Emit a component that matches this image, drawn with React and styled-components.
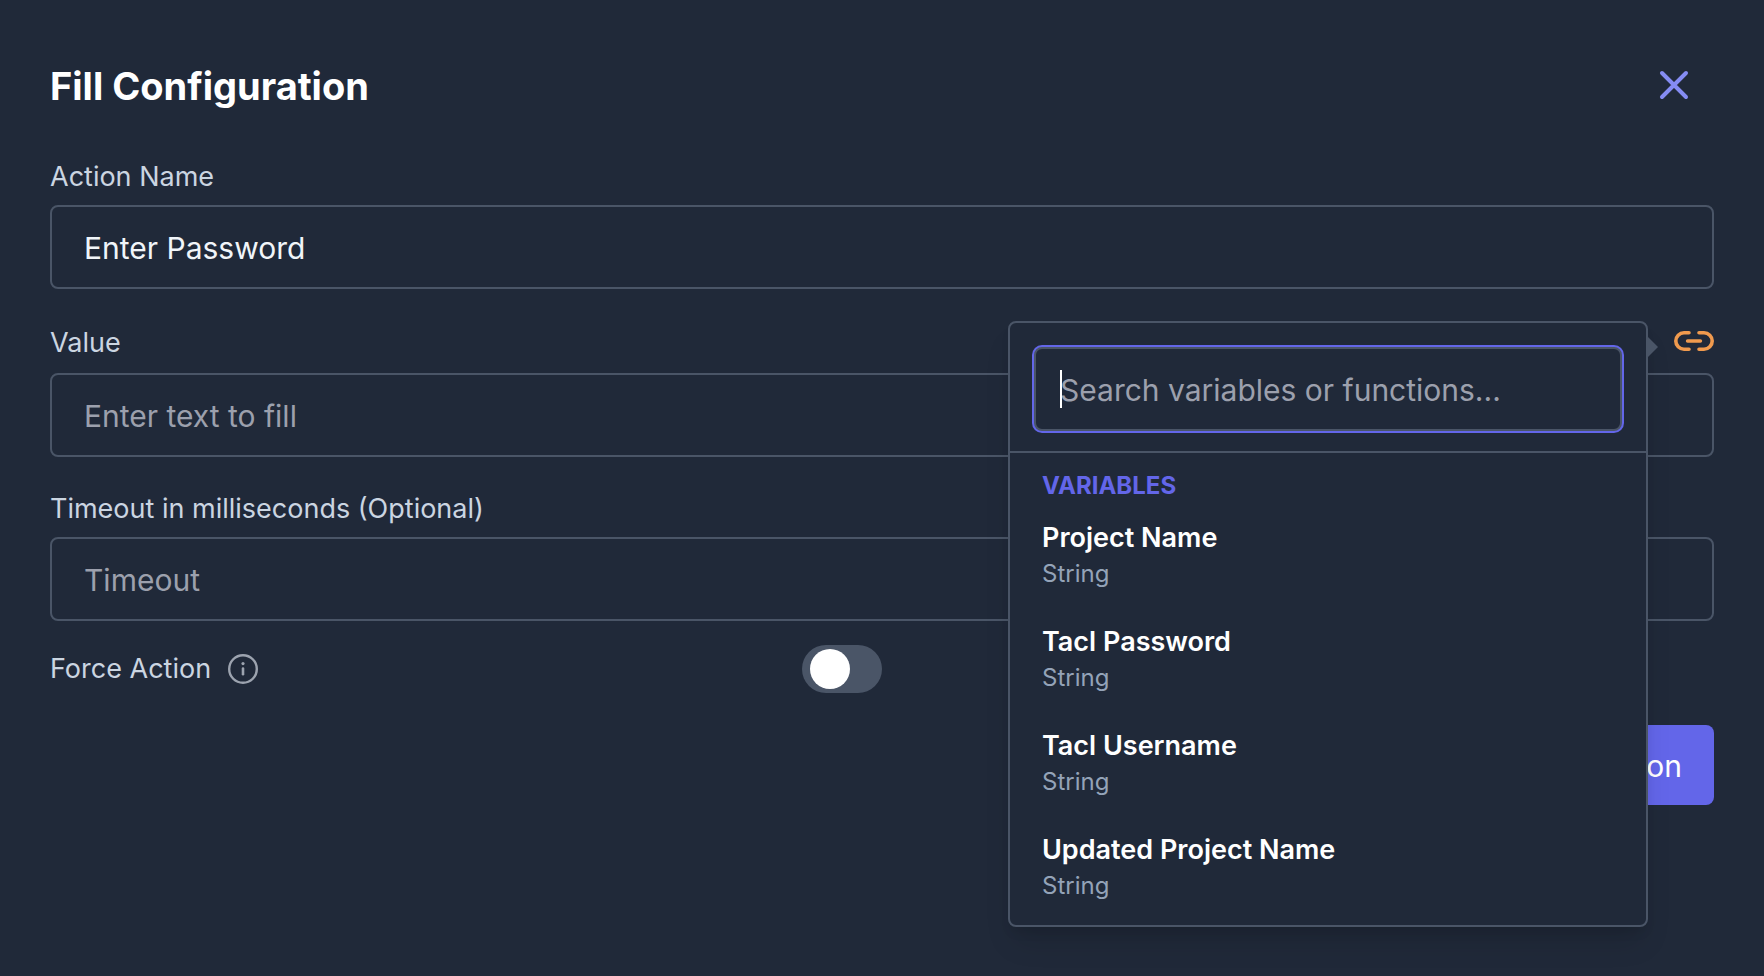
import React, { useState } from 'react';
import styled, { createGlobalStyle } from 'styled-components';

const GlobalStyle = createGlobalStyle`
  * {
    box-sizing: border-box;
  }
  body {
    margin: 0;
    background-color: #202939;
    color: #ffffff;
    font-family: Inter, 'Liberation Sans', sans-serif;
  }
  input,
  button {
    font-family: inherit;
  }
`;

const Dialog = styled.main`
  min-height: 100vh;
  padding: 45px 50px;
`;

const Header = styled.header`
  display: flex;
  align-items: center;
  justify-content: space-between;
  margin-bottom: 32px;
`;

const Title = styled.h1`
  margin: 0;
  padding-top: 2px;
  font-size: 38px;
  line-height: 56px;
  font-weight: 700;
`;

const IconButton = styled.button`
  display: flex;
  padding: ${(props) => props.$pad || '0'};
  border: none;
  background: none;
  color: ${(props) => props.$color};
  cursor: pointer;
`;

const Form = styled.form`
  display: flex;
  flex-direction: column;
  gap: 32px;
`;

const Field = styled.div`
  display: flex;
  flex-direction: column;
  gap: 8px;
`;

const LabelRow = styled.div`
  position: relative;
  display: flex;
  align-items: center;
  justify-content: space-between;
  height: 44px;
`;

const Label = styled.label`
  color: #cbd5e1;
  font-size: 27px;
  line-height: 40px;
`;

const TextInput = styled.input`
  width: 100%;
  height: 84px;
  padding: 2px ${(props) => (props.$search ? '24px' : '32px')} 0;
  border: 2px solid #4a5567;
  border-radius: 8px;
  outline: none;
  background-color: #202939;
  color: #f1f5f9;
  font-size: 30px;
  box-shadow: ${(props) => (props.$search ? '0 0 0 2px #6366e9' : 'none')};
  caret-color: ${(props) => (props.$search ? 'transparent' : 'auto')};

  &::placeholder {
    color: #9ca0ad;
    opacity: 1;
  }
`;

const LastField = styled.div`
  display: flex;
  flex-direction: column;
  gap: 24px;
`;

const ForceRow = styled.div`
  display: flex;
  align-items: center;
  justify-content: space-between;
  width: 50%;
  height: 48px;
`;

const LabelGroup = styled.div`
  display: flex;
  align-items: center;
  gap: 16px;
  color: #9ca3af;
`;

const Switch = styled.input`
  appearance: none;
  display: flex;
  align-items: center;
  width: 80px;
  height: 48px;
  margin: 0;
  padding: 0 8px;
  border-radius: 24px;
  background-color: #4a5567;
  cursor: pointer;

  &::before {
    content: '';
    width: 40px;
    height: 40px;
    border-radius: 50%;
    background-color: #ffffff;
  }
  &:checked {
    justify-content: flex-end;
    background-color: #6366e9;
  }
`;

const SubmitButton = styled.button`
  align-self: flex-end;
  height: 80px;
  padding: 2px 32px 0;
  border: none;
  border-radius: 8px;
  background-color: #6366e9;
  color: #ffffff;
  font-size: 30px;
  cursor: pointer;
`;

const Popover = styled.div`
  position: absolute;
  top: 0;
  right: 66px;
  z-index: 10;
  width: 640px;
  border: 2px solid #4a5567;
  border-radius: 8px;
  background-color: #202939;
  box-shadow: 0 20px 30px -6px rgba(0, 0, 0, 0.12),
    0 8px 12px -4px rgba(0, 0, 0, 0.1);

  /* arrow pointing at the link button */
  &::after {
    content: '';
    position: absolute;
    top: 14px;
    left: calc(100% + 2px);
    border: 10px solid transparent;
    border-left-color: #4a5567;
  }
`;

const SearchBox = styled.div`
  position: relative;
  padding: 24px 24px 20px;
  border-bottom: 2px solid #4a5567;
`;

const Caret = styled.span`
  position: absolute;
  top: 47px;
  left: 50px;
  width: 2px;
  height: 38px;
  background-color: #ffffff;
`;

const GroupTitle = styled.h2`
  margin: 0;
  padding: 17px 32px 0;
  color: #6366e9;
  font-size: 24px;
  line-height: 32px;
  font-weight: 700;
`;

const VariableList = styled.ul`
  margin: 0;
  padding: 0 0 7px;
  list-style: none;
`;

const VariableButton = styled.button`
  display: block;
  width: 100%;
  padding: 16px 32px;
  border: none;
  background: none;
  text-align: left;
  cursor: pointer;
`;

const VariableName = styled.span`
  display: block;
  color: #ffffff;
  font-size: 27px;
  line-height: 40px;
  font-weight: 600;
`;

const VariableType = styled.span`
  display: block;
  color: #94a3b8;
  font-size: 24px;
  line-height: 32px;
`;

const variables = [
  { name: 'Project Name', type: 'String' },
  { name: 'Tacl Password', type: 'String' },
  { name: 'Tacl Username', type: 'String' },
  { name: 'Updated Project Name', type: 'String' },
];

const CloseIcon = () => (
  <svg width="48" height="48" viewBox="0 0 24 24" fill="none" stroke="currentColor" strokeWidth="2" strokeLinecap="round">
    <path d="M6 18L18 6M6 6l12 12" />
  </svg>
);

const LinkIcon = () => (
  <svg width="40" height="24" viewBox="0 0 40 24" fill="none" stroke="currentColor" strokeWidth="3.6" strokeLinecap="round">
    <path d="M15 1.8H10a8.2 8.2 0 0 0 0 16.4h5M25 1.8h5a8.2 8.2 0 0 1 0 16.4h-5M13.6 10h12.8" />
  </svg>
);

const InfoIcon = () => (
  <svg width="32" height="32" viewBox="0 0 32 32" fill="none" stroke="currentColor" strokeLinecap="round">
    <circle cx="16" cy="16" r="13.8" strokeWidth="2.4" />
    <path d="M16 15.6v5.6" strokeWidth="2.6" />
    <circle cx="16" cy="10.6" r="1.6" fill="currentColor" stroke="none" />
  </svg>
);

function App() {
  const [actionName, setActionName] = useState('Enter Password');
  const [value, setValue] = useState('');
  const [timeout, setTimeoutValue] = useState('');
  const [force, setForce] = useState(false);
  const [search, setSearch] = useState('');
  const [open, setOpen] = useState(true);

  const shown = variables.filter((v) =>
    v.name.toLowerCase().includes(search.toLowerCase())
  );

  const onPick = (name) => {
    setValue(value + '{{' + name + '}}');
    setOpen(false);
  };

  return (
    <>
      <GlobalStyle />
      <Dialog>
        <Header>
          <Title>Fill Configuration</Title>
          <IconButton type="button" aria-label="Close" $color="#858cf3" $pad="16px">
            <CloseIcon />
          </IconButton>
        </Header>
        <Form onSubmit={(e) => e.preventDefault()}>
          <Field>
            <Label htmlFor="action-name">Action Name</Label>
            <TextInput
              id="action-name"
              value={actionName}
              onChange={(e) => setActionName(e.target.value)}
            />
          </Field>
          <Field>
            <LabelRow>
              <Label htmlFor="value">Value</Label>
              <IconButton
                type="button"
                aria-label="Insert variable"
                $color="#f09a4e"
                onClick={() => setOpen(!open)}
              >
                <LinkIcon />
              </IconButton>
              {open && (
                <Popover>
                  <SearchBox>
                    <TextInput
                      $search
                      aria-label="Search variables or functions"
                      placeholder="Search variables or functions..."
                      value={search}
                      onChange={(e) => setSearch(e.target.value)}
                    />
                    {search === '' && <Caret />}
                  </SearchBox>
                  <GroupTitle>VARIABLES</GroupTitle>
                  <VariableList>
                    {shown.map((v) => (
                      <li key={v.name}>
                        <VariableButton type="button" onClick={() => onPick(v.name)}>
                          <VariableName>{v.name}</VariableName>
                          <VariableType>{v.type}</VariableType>
                        </VariableButton>
                      </li>
                    ))}
                  </VariableList>
                </Popover>
              )}
            </LabelRow>
            <TextInput
              id="value"
              placeholder="Enter text to fill"
              value={value}
              onChange={(e) => setValue(e.target.value)}
            />
          </Field>
          <LastField>
            <Field>
              <Label htmlFor="timeout">Timeout in milliseconds (Optional)</Label>
              <TextInput
                id="timeout"
                placeholder="Timeout"
                value={timeout}
                onChange={(e) => setTimeoutValue(e.target.value)}
              />
            </Field>
            <ForceRow>
              <LabelGroup>
                <Label htmlFor="force">Force Action</Label>
                <InfoIcon />
              </LabelGroup>
              <Switch
                id="force"
                type="checkbox"
                role="switch"
                checked={force}
                onChange={(e) => setForce(e.target.checked)}
              />
            </ForceRow>
          </LastField>
          <SubmitButton type="submit">Save Action</SubmitButton>
        </Form>
      </Dialog>
    </>
  );
}

export default App;
